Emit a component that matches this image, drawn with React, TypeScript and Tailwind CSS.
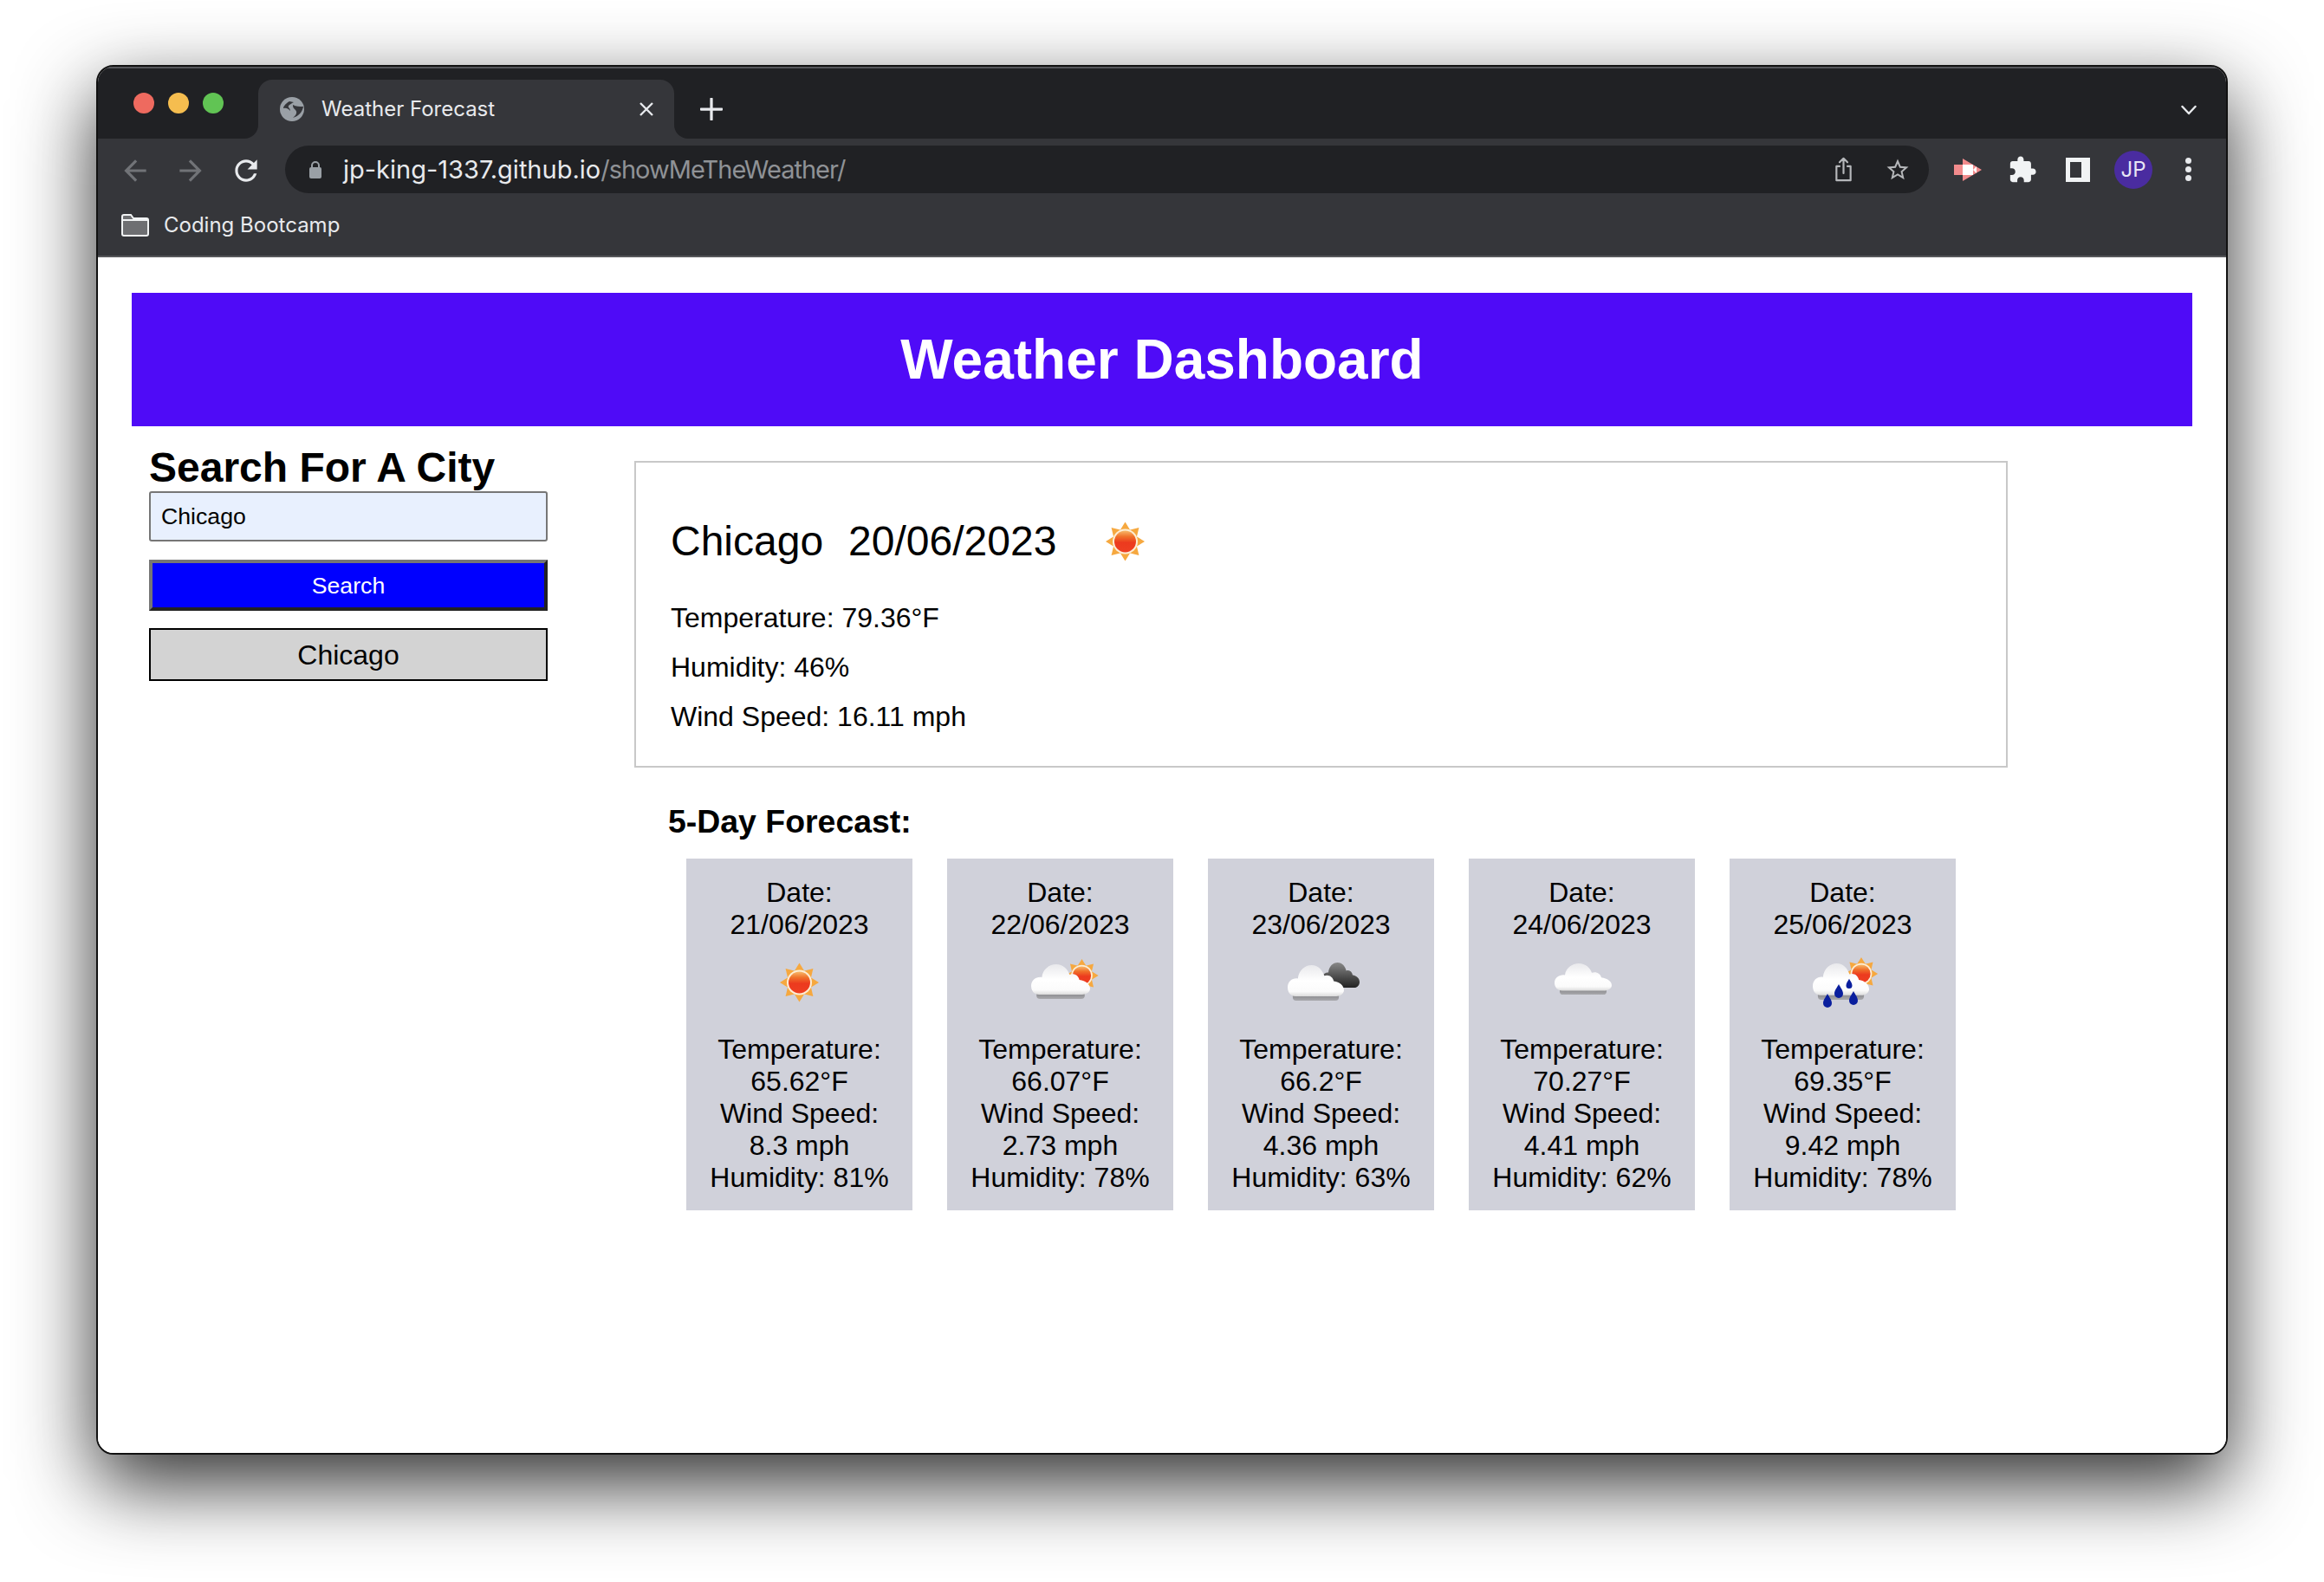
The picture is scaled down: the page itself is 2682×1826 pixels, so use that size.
import React from "react";

function Sun({ id, cx, cy, s = 1 }: { id: string; cx: number; cy: number; s?: number }) {
  const rays = [0, 45, 90, 135, 180, 225, 270, 315];
  return (
    <g transform={`translate(${cx} ${cy}) scale(${s})`} className="blur-[0.4px]">
      <defs>
        <linearGradient id={id} x1="0" y1="0" x2="0" y2="1">
          <stop offset="0" stopColor="#f7b96a" />
          <stop offset="0.28" stopColor="#f0702a" />
          <stop offset="0.55" stopColor="#ec3a1e" />
          <stop offset="1" stopColor="#ee3f22" />
        </linearGradient>
      </defs>
      {rays.map((a) => (
        <polygon key={a} points="-6.5,-12 0,-22.5 6.5,-12" fill="#f6a83f" transform={`rotate(${a})`} />
      ))}
      <circle r="14.5" fill="#fdeed6" />
      <circle r="12.5" fill={`url(#${id})`} />
    </g>
  );
}

function Cloud({ id, x, y, w, h, dark }: { id: string; x: number; y: number; w: number; h: number; dark?: boolean }) {
  return (
    <g transform={`translate(${x} ${y}) scale(${w / 66} ${h / 40})`}>
      <defs>
        <linearGradient id={id} x1="0" y1="0" x2="0" y2="1">
          {dark ? (
            <>
              <stop offset="0" stopColor="#888" />
              <stop offset="0.6" stopColor="#4a4a4a" />
              <stop offset="1" stopColor="#222" />
            </>
          ) : (
            <>
              <stop offset="0" stopColor="#e9e9ec" />
              <stop offset="0.5" stopColor="#ffffff" />
              <stop offset="0.85" stopColor="#fbfbfb" />
              <stop offset="1" stopColor="#dcdcdc" />
            </>
          )}
        </linearGradient>
        <linearGradient id={id + "b"} x1="0" y1="0" x2="0" y2="1">
          <stop offset="0" stopColor="#77777a" />
          <stop offset="1" stopColor="#a9a9ad" />
        </linearGradient>
      </defs>
      {!dark && <rect x="6" y="30" width="54" height="10" rx="4" fill={`url(#${id}b)`} />}
      <path
        d={
          dark
            ? "M9 40C3 40 0 34 0 28C0 20 6 15 12 16C13 6 20 0 28 0C36 0 41 6 43 13C48 11 53 14 54 20C61 21 66 25 66 31C66 36 62 40 57 40Z"
            : "M9 35C3 35 0 30 0 25C0 18 6 14 12 15C13 6 20 0 28 0C36 0 41 6 43 12C48 10 53 13 54 18C61 19 66 23 66 28C66 32 62 35 57 35Z"
        }
        fill={`url(#${id})`}
      />
    </g>
  );
}

function Drop({ x, y, s = 1 }: { x: number; y: number; s?: number }) {
  return (
    <path
      transform={`translate(${x} ${y}) scale(${s})`}
      d="M0 -9C2 -5 5 -2 5 2A5 5 0 0 1 -5 2C-5 -2 -2 -5 0 -9Z"
      fill="#0a1f9e"
    />
  );
}

function Weather({ kind, id }: { kind: string; id: string }) {
  return (
    <svg viewBox="0 0 100 100" className="w-[100px] h-[100px] block">
      {kind === "sun" && <Sun id={id + "s"} cx={49.5} cy={46} />}
      {kind === "few" && (
        <>
          <Sun id={id + "s"} cx={74.5} cy={38} s={0.85} />
          <g className="blur-[0.7px]">
            <Cloud id={id + "c"} x={16} y={25} w={68} h={40} />
          </g>
        </>
      )}
      {kind === "broken" && (
        <>
          <g className="blur-[0.5px]">
            <Cloud id={id + "d"} x={50} y={23} w={44} h={29} dark />
          </g>
          <g className="blur-[0.7px]">
            <Cloud id={id + "c"} x={11} y={26} w={65} h={41} />
          </g>
        </>
      )}
      {kind === "cloud" && (
        <g className="blur-[0.7px]">
          <Cloud id={id + "c"} x={18} y={24} w={66} h={36} />
        </g>
      )}
      {kind === "rain" && (
        <>
          <Sun id={id + "s"} cx={71} cy={36} s={0.85} />
          <g className="blur-[0.7px]">
            <Cloud id={id + "c"} x={15} y={24} w={65} h={42} />
          </g>
          <Drop x={32} y={68} />
          <Drop x={45} y={57} />
          <Drop x={62} y={65} />
          <Drop x={57} y={48} s={0.7} />
        </>
      )}
    </svg>
  );
}

const days = [
  { date: "21/06/2023", icon: "sun", t: "65.62°F", w: "8.3 mph", h: "81%" },
  { date: "22/06/2023", icon: "few", t: "66.07°F", w: "2.73 mph", h: "78%" },
  { date: "23/06/2023", icon: "broken", t: "66.2°F", w: "4.36 mph", h: "63%" },
  { date: "24/06/2023", icon: "cloud", t: "70.27°F", w: "4.41 mph", h: "62%" },
  { date: "25/06/2023", icon: "rain", t: "69.35°F", w: "9.42 mph", h: "78%" },
];

function Card({ d, i }: { d: (typeof days)[number]; i: number }) {
  return (
    <div className="w-[261px] h-[406px] bg-[#d0d1da] pt-[21px] text-center text-[32px] leading-[37px] flex flex-col items-center">
      <div>Date:</div>
      <div>{d.date}</div>
      <div className="h-[107px] w-[100px] pt-[2px]">
        <Weather kind={d.icon} id={"c" + i} />
      </div>
      <div>Temperature:</div>
      <div>{d.t}</div>
      <div>Wind Speed:</div>
      <div>{d.w}</div>
      <div>Humidity: {d.h}</div>
    </div>
  );
}

function Mat({ d, className, fill }: { d: string; className: string; fill: string }) {
  return (
    <svg viewBox="0 0 24 24" className={className} fill={fill}>
      <path d={d} />
    </svg>
  );
}

export default function App() {
  return (
    <div className="w-[2682px] h-[1826px] bg-white pt-[75px] pl-[111px] overflow-hidden font-['Liberation_Sans',Arial,sans-serif] text-black">
      <div className="w-[2460px] h-[1604px] rounded-[20px] border-2 border-[#111] bg-white overflow-hidden flex flex-col shadow-[0_34px_90px_rgba(0,0,0,0.82)]">
        {/* tab strip */}
        <div className="h-[83px] shrink-0 bg-[#202124] border-t-2 border-[#55565a] flex items-end font-['Inter',sans-serif]">
          <div className="w-[185px] h-full flex items-center gap-[16px] pl-[41px] pb-[2px] shrink-0">
            <span className="w-[24px] h-[24px] rounded-full bg-[#ee6a5f]" />
            <span className="w-[24px] h-[24px] rounded-full bg-[#f5bd4f]" />
            <span className="w-[24px] h-[24px] rounded-full bg-[#61c454]" />
          </div>
          <div className="relative w-[480px] h-[68px] shrink-0 bg-[#35363a] rounded-t-[16px] flex items-center pl-[25px] pr-[22px] text-white">
            <div className="absolute -left-[16px] bottom-0 w-[16px] h-[16px] bg-[#35363a]">
              <div className="w-full h-full bg-[#202124] rounded-br-[16px]" />
            </div>
            <div className="absolute -right-[16px] bottom-0 w-[16px] h-[16px] bg-[#35363a]">
              <div className="w-full h-full bg-[#202124] rounded-bl-[16px]" />
            </div>
            <svg viewBox="0 0 28 28" className="w-[28px] h-[28px] shrink-0">
              <circle cx="14" cy="14" r="14" fill="#9aa0a6" />
              <path d="M11 5C6 8 4 11 4 13C8 12 10 14 12 16C12 13 9 12 10 10C12 8 14 7 16 6Z" fill="#35363a" />
              <path d="M15 9C19 11 22 11 27 11C26 17 22 22 15 24C19 21 21 17 17 14C15 12 15 11 15 9Z" fill="#35363a" />
            </svg>
            <span className="ml-[20px] text-[24px] leading-[30px] text-[#e8eaed] whitespace-nowrap">Weather Forecast</span>
            <svg viewBox="0 0 18 18" className="ml-auto w-[18px] h-[18px] mr-[1px]" stroke="#e8eaed" strokeWidth="2.4" fill="none">
              <path d="M2 2L16 16M16 2L2 16" />
            </svg>
          </div>
          <div className="ml-[30px] mb-[21px] shrink-0">
            <svg viewBox="0 0 24 24" className="w-[26px] h-[26px]" stroke="#e8eaed" strokeWidth="3" fill="none" strokeLinecap="round">
              <path d="M12 1V23M1 12H23" />
            </svg>
          </div>
          <div className="ml-auto mr-[34px] mb-[27px]">
            <svg viewBox="0 0 18 12" className="w-[18px] h-[12px]" stroke="#e8eaed" strokeWidth="2.4" fill="none" strokeLinecap="round" strokeLinejoin="round">
              <path d="M1.5 2L9 10L16.5 2" />
            </svg>
          </div>
        </div>

        {/* toolbar */}
        <div className="h-[71px] shrink-0 bg-[#35363a] flex items-start">
          <div className="w-[216px] h-[74px] flex items-center shrink-0 pl-[24px] gap-[26px]">
            <Mat className="w-[38px] h-[38px]" fill="#717377" d="M20 11H7.83l5.59-5.59L12 4l-8 8 8 8 1.41-1.41L7.83 13H20v-2z" />
            <Mat className="w-[38px] h-[38px]" fill="#717377" d="M12 4l-1.41 1.41L16.17 11H4v2h12.17l-5.58 5.59L12 20l8-8z" />
            <Mat className="w-[38px] h-[38px]" fill="#e8eaed" d="M17.65 6.35C16.2 4.9 14.21 4 12 4c-4.42 0-7.99 3.58-7.99 8s3.57 8 7.99 8c3.73 0 6.84-2.55 7.73-6h-2.08c-.82 2.33-3.04 4-5.65 4-3.31 0-6-2.69-6-6s2.69-6 6-6c1.66 0 3.14.69 4.22 1.78L13 11h7V4l-2.35 2.35z" />
          </div>
          <div className="w-[1897px] h-[55px] mt-[8px] shrink-0 rounded-full bg-[#202124] flex items-center pl-[27px] pr-[21px]">
            <svg viewBox="0 0 16 22" className="w-[16px] h-[22px] shrink-0">
              <path d="M4 9V6a4 4 0 0 1 8 0v3" stroke="#9aa0a6" strokeWidth="2" fill="none" />
              <rect x="1" y="8" width="14" height="13" rx="2" fill="#9aa0a6" />
            </svg>
            <span className="ml-[24px] text-[29px] leading-[36px] whitespace-nowrap font-['Inter',sans-serif] text-[#e8eaed]">
              jp-king-1337.github.io<span className="text-[#8f9296] tracking-[-1px]">/showMeTheWeather/</span>
            </span>
            <svg viewBox="0 0 24 32" className="ml-auto w-[23px] h-[29px] shrink-0" fill="none" stroke="#b5b7ba" strokeWidth="2.4" strokeLinejoin="round" strokeLinecap="round">
              <path d="M7 12H3V30H21V12H17M12 21V2M7 7L12 2L17 7" />
            </svg>
            <svg viewBox="0 0 24 24" className="ml-[36px] w-[30px] h-[30px] shrink-0" fill="#b5b7ba">
              <path d="M22 9.24l-7.19-.62L12 2 9.19 8.63 2 9.24l5.46 4.73L5.82 21 12 17.27 18.18 21l-1.63-7.03L22 9.24zM12 15.4l-3.76 2.27 1-4.28-3.32-2.88 4.38-.38L12 6.1l1.71 4.04 4.38.38-3.32 2.88 1 4.28L12 15.4z" />
            </svg>
          </div>
          <div className="flex items-center h-[55px] mt-[8px] shrink-0 pl-[29px]">
            <svg viewBox="0 0 32 26" className="w-[32px] h-[26px] shrink-0">
              <rect x="0" y="7" width="16" height="12" fill="#f28b8c" />
              <polygon points="10,0 32,13 10,26" fill="#f28b8c" />
              <rect x="10" y="7" width="12" height="12" fill="#fff" />
              <polygon points="22,13 26,9 26,17" fill="#fff" />
            </svg>
            <Mat className="ml-[30px] w-[34px] h-[34px] shrink-0" fill="#f1f3f4" d="M20.5 11H19V7c0-1.1-.9-2-2-2h-4V3.5C13 2.12 11.88 1 10.5 1S8 2.12 8 3.5V5H4c-1.1 0-1.99.9-1.99 2v3.8H3.5c1.49 0 2.7 1.21 2.7 2.7s-1.21 2.7-2.7 2.7H2V20c0 1.1.9 2 2 2h3.8v-1.5c0-1.49 1.21-2.7 2.7-2.7 1.49 0 2.7 1.21 2.7 2.7V22H17c1.1 0 2-.9 2-2v-4h1.5c1.38 0 2.5-1.12 2.5-2.5S21.88 11 20.5 11z" />
            <div className="ml-[33px] w-[28px] h-[28px] bg-[#f1f3f4] pl-[5px] pr-[10px] py-[5px] shrink-0">
              <div className="w-full h-full bg-[#35363a]" />
            </div>
            <div className="ml-[28px] w-[44px] h-[44px] rounded-full bg-[#4a2ca0] text-[#e8e6f5] text-[24px] flex items-center justify-center font-['Inter',sans-serif] shrink-0">
              JP
            </div>
            <div className="flex flex-col gap-[3px] ml-[38px] shrink-0">
              <span className="w-[7px] h-[7px] rounded-full bg-[#e8eaed]" />
              <span className="w-[7px] h-[7px] rounded-full bg-[#e8eaed]" />
              <span className="w-[7px] h-[7px] rounded-full bg-[#e8eaed]" />
            </div>
          </div>
        </div>

        {/* bookmarks */}
        <div className="h-[66px] shrink-0 bg-[#35363a] border-b-2 border-[#56575a] flex items-center pl-[27px] pb-[6px]">
          <svg viewBox="0 0 32 26" className="w-[32px] h-[26px] shrink-0">
            <path d="M1 3a2 2 0 0 1 2-2h8l3 4h15a2 2 0 0 1 2 2v16a2 2 0 0 1-2 2H3a2 2 0 0 1-2-2z" fill="#6e6f72" stroke="#f1f3f4" strokeWidth="2" />
            <path d="M2 7H30" stroke="#f1f3f4" strokeWidth="2" />
          </svg>
          <span className="ml-[17px] text-[24px] leading-[30px] text-[#e8eaed] font-['Inter',sans-serif] whitespace-nowrap">Coding Bootcamp</span>
        </div>

        {/* page */}
        <div className="flex-1 bg-white pt-[41px] px-[39px]">
          <div className="h-[154px] bg-[#4f0bf7] flex items-center justify-center text-white text-[64px] leading-[74px] font-bold">
            Weather Dashboard
          </div>
          <div className="flex pl-[20px]">
            <div className="w-[460px] shrink-0 pt-[20px]">
              <div className="text-[48px] leading-[55px] font-bold whitespace-nowrap">Search For A City</div>
              <div className="h-[58px] rounded-[3px] border-2 border-[#767676] bg-[#e8f0fe] flex items-center pl-[12px] text-[26.67px]">
                Chicago
              </div>
              <div className="mt-[21px] h-[59px] border-[4px] border-t-[#767676] border-l-[#767676] border-r-[#222222] border-b-[#222222] bg-[#0000ff] text-white text-[26.67px] flex items-center justify-center">
                Search
              </div>
              <div className="mt-[20px] h-[61px] border-2 border-black bg-[#d3d3d3] text-[32px] flex items-center justify-center">
                Chicago
              </div>
            </div>
            <div className="ml-[100px] pt-[40px] flex-1">
              <div className="w-[1585px] h-[354px] border-2 border-[#c8c8c8] pl-[40px] pt-[61px]">
                <div className="flex items-center h-[60px] text-[48px] leading-[60px] whitespace-nowrap">
                  <span>Chicago</span>
                  <span className="ml-[29px]">20/06/2023</span>
                  <div className="ml-[30px] w-[100px] h-[100px] shrink-0 translate-y-[4px]">
                    <Weather kind="sun" id="main" />
                  </div>
                </div>
                <div className="mt-[40px] flex flex-col gap-[20px] text-[32px] leading-[37px]">
                  <div>Temperature: 79.36°F</div>
                  <div>Humidity: 46%</div>
                  <div>Wind Speed: 16.11 mph</div>
                </div>
              </div>
              <div className="ml-[39px] mt-[41px] h-[43px] text-[37.44px] leading-[43px] font-bold">5-Day Forecast:</div>
              <div className="ml-[60px] mt-[21px] flex gap-[40px]">
                {days.map((d, i) => (
                  <Card key={d.date} d={d} i={i} />
                ))}
              </div>
            </div>
          </div>
        </div>
      </div>
    </div>
  );
}
